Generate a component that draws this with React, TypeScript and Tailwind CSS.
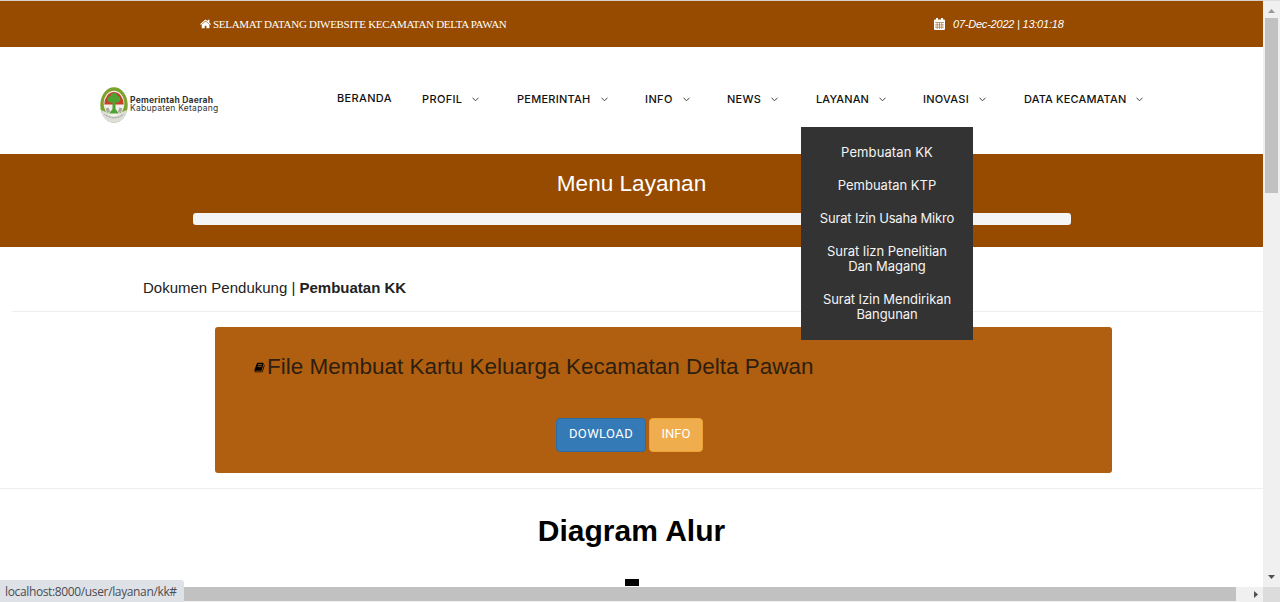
import React from "react";

const navItems = [
  { label: "PROFIL", width: "w-[95px]", tracking: "tracking-[0.35px]" },
  { label: "PEMERINTAH", width: "w-[128px]", tracking: "tracking-[0.25px]" },
  { label: "INFO", width: "w-[82px]", tracking: "tracking-[0.4px]" },
  { label: "NEWS", width: "w-[89px]", tracking: "tracking-[0.3px]" },
  { label: "LAYANAN", width: "w-[107px]", tracking: "tracking-[0.1px]" },
  { label: "INOVASI", width: "w-[101px]", tracking: "tracking-[0.25px]" },
  { label: "DATA KECAMATAN", width: "w-[121px]", tracking: "tracking-[0.14px]" },
];

const services = [
  { lines: ["Pembuatan KK"], tracking: "tracking-[0.1px]" },
  { lines: ["Pembuatan KTP"], tracking: "tracking-[0px]" },
  { lines: ["Surat Izin Usaha Mikro"], tracking: "tracking-[-0.18px]" },
  { lines: ["Surat Iizn Penelitian", "Dan Magang"], tracking: "tracking-[-0.05px]" },
  { lines: ["Surat Izin Mendirikan", "Bangunan"], tracking: "tracking-[-0.08px]" },
];

function HomeIcon() {
  return (
    <svg viewBox="0 0 1792 1792" className="h-[12px] w-[12px] shrink-0 fill-white">
      <path d="M1408 992v480q0 26-19 45t-45 19h-384v-384h-256v384h-384q-26 0-45-19t-19-45v-480q0-1 .5-3t.5-3l575-474 575 474q1 2 1 6zm223-69l-62 74q-8 9-21 11h-3q-13 0-21-7l-692-577-692 577q-12 8-24 7-13-2-21-11l-62-74q-8-10-7-23.500t11-21.500l719-599q32-26 76-26t76 26l244 204v-195q0-14 9-23t23-9h192q14 0 23 9t9 23v408l219 182q10 8 11 21.500t-7 23.500z" />
    </svg>
  );
}

function CalendarIcon() {
  return (
    <svg viewBox="0 0 11 12" className="h-3 w-[11px] shrink-0">
      <path d="M1 1.500h9a1 1 0 0 1 1 1V11a1 1 0 0 1-1 1H1a1 1 0 0 1-1-1V2.500a1 1 0 0 1 1-1z" fill="#fff" />
      <path d="M2 0h2v3H2zM7 0h2v3H7z" fill="#fff" />
      <path d="M1 4.500h9M1 6.900h9M1 9.200h9M3.200 4.500V11M5.500 4.500V11M7.800 4.500V11" stroke="#964b00" strokeWidth=".55" />
    </svg>
  );
}

function BookIcon() {
  return (
    <svg viewBox="0 0 1792 1792" className="h-[11px] w-[11px] shrink-0 fill-black">
      <path d="M1703 478q40 57 18 129l-275 906q-19 64-76.500 107.500t-122.500 43.500h-923q-77 0-148.500-53.500t-99.500-131.500q-24-67-2-127 0-4 3-27t4-37q1-8-3-21.500t-3-19.500q2-11 8-21t16.500-23.500 16.500-23.500q23-38 45-91.500t30-91.500q3-10 .5-30t-.5-28q3-11 17-28t17-23q21-36 42-92t25-90q1-9-2.500-32t.5-28q4-13 22-30.500t22-22.500q19-26 42.500-84.500t27.500-96.500q1-8-3-25.500t-2-26.500q2-8 9-18t18-23 17-21q8-12 16.500-30.500t15-35 16-36 19.500-32 26.500-23.500 36-11.500 47.500 5.500l-1 3q38-9 51-9h761q74 0 114 56t18 130l-274 906q-36 119-71.500 153.500t-128.500 34.500h-869q-27 0-38 15-11 16-1 43 24 70 144 70h923q29 0 56-15.500t35-41.500l300-987q7-22 5-57 38 15 59 43zm-1064 2q-4 13 2 22.500t20 9.500h608q13 0 25.500-9.500t16.500-22.500l21-64q4-13-2-22.500t-20-9.500h-608q-13 0-25.500 9.500t-16.500 22.500zm-83 256q-4 13 2 22.500t20 9.500h608q13 0 25.500-9.500t16.500-22.500l21-64q4-13-2-22.500t-20-9.500h-608q-13 0-25.500 9.500t-16.500 22.500z" />
    </svg>
  );
}

function Chevron() {
  return (
    <svg viewBox="0 0 7 5" className="h-[5px] w-[7px] shrink-0" fill="none" stroke="#333" strokeWidth=".9">
      <path d="M.5.700 3.500 3.800 6.500.700" />
    </svg>
  );
}

function Crest() {
  return (
    <svg viewBox="0 0 28 36" className="h-9 w-7 shrink-0">
      <ellipse cx="14" cy="18" rx="13.700" ry="17.700" fill="#79a32c" />
      <path d="M1 23Q14 30 27 23Q24.500 35.600 14 35.700Q3.500 35.600 1 23z" fill="#dcded7" />
      <ellipse cx="14" cy="16.500" rx="10.300" ry="12.800" fill="#f4f1ea" />
      <path d="M4.300 17.500a9.700 12.500 0 0 1 19.400 0z" fill="#c8402a" />
      <path d="M14 6c2.500 0 3.500 1.500 3.500 3 3 .5 4 4 1.500 6-1.200 1-2.500.8-3.500.3V22l3.500 4.500H9L12.500 22v-6.700c-1 .5-2.300.7-3.500-.3-2.500-2-1.500-5.500 1.500-6C10.500 7.500 11.500 6 14 6z" fill="#4fa332" />
      <path d="M5.500 21.500l3-1 1.500 4-2.500 2zM22.500 21.500l-3-1-1.500 4 2.500 2z" fill="#a8a8a0" />
      <path d="M4.500 27.500q9.500 6.500 19 0" fill="none" stroke="#888b84" strokeWidth="1" strokeDasharray="1 .6" />
    </svg>
  );
}

export default function App() {
  return (
    <div className="relative flex h-[602px] w-[1280px] flex-col overflow-hidden bg-white font-['Liberation_Sans',sans-serif]">
      <div className="flex h-[587px]">
        <main className="flex w-[1263px] flex-col overflow-hidden">
          <div className="flex h-[47px] shrink-0 items-center border-t border-[#d8cfc8] bg-[#964b00] pl-[200px] text-white">
            <div className="flex w-[734px] items-center gap-px">
              <HomeIcon />
              <span className="whitespace-nowrap font-['Liberation_Serif',serif] text-[11px] leading-4 tracking-[-0.29px]">
                SELAMAT DATANG DIWEBSITE KECAMATAN DELTA PAWAN
              </span>
            </div>
            <div className="flex items-center gap-2">
              <CalendarIcon />
              <span className="whitespace-nowrap text-[11px] italic leading-4 tracking-[-0.22px]">07-Dec-2022 | 13:01:18</span>
            </div>
          </div>

          <header className="relative flex h-[107px] shrink-0 pl-[100px]">
            <div className="flex w-[237px] gap-[2px] pt-10">
              <Crest />
              <div className="whitespace-nowrap pt-[9px] font-['Inter',sans-serif] text-[8.500px] leading-[8px] text-[#333]">
                <p className="font-bold tracking-[0.22px]">Pemerintah Daerah</p>
                <p className="tracking-[0.24px]">Kabupaten Ketapang</p>
              </div>
            </div>
            <nav className="flex whitespace-nowrap pt-[45px] font-['Inter',sans-serif] text-[11px] font-medium leading-[14px] text-[#111]">
              <a className="block h-[14px] w-[85px] leading-[12px] tracking-[0.35px]">BERANDA</a>
              {navItems.map((item) => (
                <a key={item.label} className={`flex h-[14px] items-center gap-[10px] ${item.width}`}>
                  <span className={item.tracking}>{item.label}</span>
                  <Chevron />
                </a>
              ))}
            </nav>
            <div className="absolute left-[801px] top-[80px] z-10 flex h-[213px] w-[172px] flex-col gap-[18px] bg-[#333] pt-[18px] text-center font-['Inter',sans-serif] text-[13px] leading-[15px] text-[#f4f4f4]">
              {services.map((service) => (
                <a key={service.lines[0]} className={`block whitespace-nowrap ${service.tracking}`}>
                  {service.lines.map((line) => (
                    <span key={line} className="block">{line}</span>
                  ))}
                </a>
              ))}
            </div>
          </header>

          <section className="flex h-[93px] shrink-0 flex-col items-center bg-[#964b00] pt-4">
            <h2 className="text-[22.600px] leading-7 text-white">Menu Layanan</h2>
            <div className="mt-[15px] h-3 w-[878px] rounded-[3px] bg-[#f5f5f5]" />
          </section>

          <section className="ml-3 flex h-[65px] shrink-0 items-center border-b border-[#eee] pl-[131px] pt-[17px]">
            <p className="whitespace-nowrap text-[15px] leading-5 text-[#222]">
              Dokumen Pendukung | <b>Pembuatan KK</b>
            </p>
          </section>

          <section className="flex h-[177px] shrink-0 border-b border-[#eee] pl-[215px] pt-[15px]">
            <div className="h-[146px] w-[897px] rounded-[3px] bg-[#b05f10] pl-[39px] pt-[25px]">
              <div className="flex h-[30px] items-center gap-[2px]">
                <BookIcon />
                <h3 className="whitespace-nowrap text-[22.500px] leading-[30px] text-[#2d1e10]">
                  File Membuat Kartu Keluarga Kecamatan Delta Pawan
                </h3>
              </div>
              <div className="mt-9 flex gap-[3px] pl-[302px] font-['Roboto',sans-serif] text-[13px] leading-[30px] text-white">
                <button className="flex h-[34px] w-[90px] justify-center rounded-[4px] border border-[#2e6da4] bg-[#337ab7] tracking-[0.4px]">DOWLOAD</button>
                <button className="flex h-[34px] w-[54px] justify-center rounded-[4px] border border-[#eea236] bg-[#f0ad4e]">INFO</button>
              </div>
            </div>
          </section>

          <section className="flex grow flex-col items-center pt-6">
            <h1 className="text-[30px] font-bold leading-[36px] text-black">Diagram Alur</h1>
            <div className="mt-[30px] h-[7px] w-[14px] bg-black" />
          </section>
        </main>
        <aside className="flex w-[17px] flex-col items-center border-t border-[#ddd] bg-[#f0f0f0]">
          <svg viewBox="0 0 7 4" className="mt-2 h-1 w-[7px] shrink-0"><path d="M0 4 3.500 0 7 4z" fill="#999" /></svg>
          <div className="mt-[5px] h-[175px] w-[13px] shrink-0 bg-[#c1c1c1]" />
          <svg viewBox="0 0 7 4" className="mb-2 mt-auto h-1 w-[7px] shrink-0"><path d="M0 0h7L3.500 4z" fill="#505050" /></svg>
        </aside>
      </div>
      <footer className="flex h-[15px] bg-[#f0f0f0]">
        <div className="h-[14px] w-[1236px] bg-[#c1c1c1]" />
        <div className="flex w-[27px] items-center justify-center pl-3">
          <svg viewBox="0 0 4 7" className="h-[7px] w-1"><path d="M0 0 4 3.500 0 7z" fill="#505050" /></svg>
        </div>
        <div className="h-full w-[17px] bg-[#dcdcdc]" />
      </footer>
      <div className="absolute bottom-0 left-0 h-[22px] w-[184px] whitespace-nowrap rounded-tr-[3px] bg-[#dee1e6] pl-[5px] font-['Open_Sans',sans-serif] text-[12px] leading-[24px] tracking-[-0.36px] text-[#4a4d51]">
        localhost:8000/user/layanan/kk#
      </div>
    </div>
  );
}
